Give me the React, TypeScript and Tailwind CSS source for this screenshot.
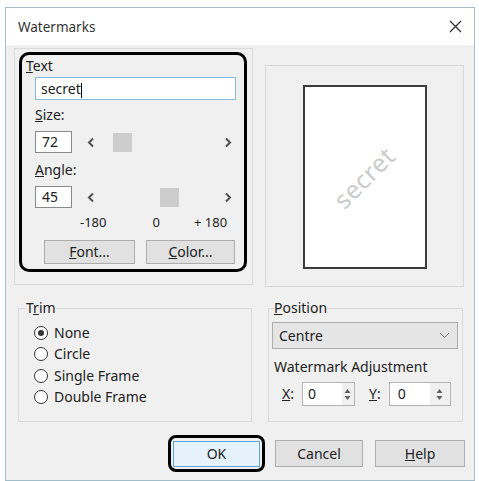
import React from "react"

function Chevron({ dir }: { dir: "left" | "right" }) {
    return (
        <svg width="8" height="11" viewBox="0 0 8 11" className="shrink-0">
            <path
                d={dir === "left" ? "M6 1.5 L2 5.5 L6 9.5" : "M2 1.5 L6 5.5 L2 9.5"}
                fill="none"
                stroke="#505050"
                strokeWidth="2"
            />
        </svg>
    )
}

function Spin() {
    return (
        <svg width="7" height="13" viewBox="0 0 7 13">
            <path d="M3.5 1 L6.5 5 L0.5 5 Z" fill="#606060" />
            <path d="M0.5 8 L6.5 8 L3.5 12 Z" fill="#606060" />
        </svg>
    )
}

function ScrollRow({ value, thumb }: { value: string; thumb: number }) {
    return (
        <div className="flex items-center ml-[13px] w-[197px] h-[22px]">
            <div className="w-[37px] h-[22px] border border-[#8a8a8a] bg-white pl-[6px] leading-[20px] text-[14px]">
                {value}
            </div>
            <div className="ml-[15px]">
                <Chevron dir="left" />
            </div>
            <div className="h-[19px] w-[19px] bg-[#cdcdcd]" style={{ marginLeft: thumb }} />
            <div className="flex-1" />
            <Chevron dir="right" />
        </div>
    )
}

function Radio({ label, checked }: { label: string; checked?: boolean }) {
    return (
        <div className="flex items-center h-[21.5px] pl-[15px]">
            <div className="w-[14px] h-[14px] rounded-full border border-[#333] bg-white flex items-center justify-center">
                {checked && <div className="w-[6px] h-[6px] rounded-full bg-[#333]" />}
            </div>
            <span className="ml-[6px]">{label}</span>
        </div>
    )
}

function Btn({ children, w }: { children: React.ReactNode; w: string }) {
    return (
        <div className={`${w} h-[24px] bg-[#e1e1e1] border border-[#adadad] flex items-center justify-center text-[14px]`}>
            {children}
        </div>
    )
}

export default function App() {
    return (
        <div className="w-[479px] h-[481px] bg-white pt-[7px] pl-[5px] font-['Noto_Sans',sans-serif] text-[14px] text-[#222] leading-[18px]">
            <div className="w-[470px] h-[474px] border border-[#a3bcc9] flex flex-col">
                {/* title bar */}
                <div className="h-[37px] bg-white flex items-center justify-between pl-[12px] pr-[12px]">
                    <span className="text-[#333] text-[13.5px]">Watermarks</span>
                    <svg width="13" height="13" viewBox="0 0 13 13">
                        <path d="M1 1 L12 12 M12 1 L1 12" stroke="#333" strokeWidth="1.3" />
                    </svg>
                </div>

                <div className="flex-1 bg-[#f0f0f0] flex flex-col">
                    {/* top row */}
                    <div className="flex items-start">
                        <div className="ml-[8px] mt-[3px] w-[239px] h-[237px] border border-[#dadada]">
                            <div className="ml-[4px] mt-[3px] w-[228px] h-[220px] border-[3px] border-black rounded-[10px] flex flex-col">
                                <div className="pl-[4px] pt-[2px]">
                                    <u>T</u>ext
                                </div>
                                <div className="ml-[13px] mt-[2px] w-[201px] h-[23px] border border-[#86b9dd] bg-white pl-[5px] leading-[21px]">
                                    secret<span className="inline-block w-px h-[15px] bg-black align-middle" />
                                </div>
                                <div className="ml-[13px] mt-[6px]">
                                    <u>S</u>ize:
                                </div>
                                <div className="mt-[7px]">
                                    <ScrollRow value="72" thumb={18} />
                                </div>
                                <div className="ml-[13px] mt-[8px]">
                                    <u>A</u>ngle:
                                </div>
                                <div className="mt-[7px]">
                                    <ScrollRow value="45" thumb={65} />
                                </div>
                                <div className="mt-[5px] flex text-[13px]">
                                    <span className="ml-[58px]">-180</span>
                                    <span className="ml-[46px]">0</span>
                                    <span className="ml-[34px]">+ 180</span>
                                </div>
                                <div className="mt-[9px] ml-[22px] flex gap-[11px]">
                                    <Btn w="w-[91px]">
                                        <span>
                                            <u>F</u>ont...
                                        </span>
                                    </Btn>
                                    <Btn w="w-[89px]">
                                        <span>
                                            <u>C</u>olor...
                                        </span>
                                    </Btn>
                                </div>
                            </div>
                        </div>

                        <div className="ml-[12px] mt-[20px] w-[199px] h-[222px] border border-[#d8d8d8] flex justify-center">
                            <div className="mt-[19px] w-[124px] h-[184px] border-2 border-[#3c3c3c] bg-white flex items-center justify-center overflow-hidden">
                                <span className="-rotate-45 text-[25px] leading-none text-[#cbcbcb] tracking-[0.5px]">
                                    secret
                                </span>
                            </div>
                        </div>
                    </div>

                    {/* bottom row */}
                    <div className="flex mt-[12px]">
                        <fieldset className="ml-[12px] w-[234px] h-[123px] border border-[#dadada] pl-[7px]">
                            <legend>
                                T<u>r</u>im
                            </legend>
                            <div className="-ml-[7px] mt-[5px] flex flex-col">
                                <Radio label="None" checked />
                                <Radio label="Circle" />
                                <Radio label="Single Frame" />
                                <Radio label="Double Frame" />
                            </div>
                        </fieldset>

                        <fieldset className="ml-[16px] w-[195px] h-[123px] border border-[#dadada] pl-[5px]">
                            <legend>
                                <u>P</u>osition
                            </legend>
                            <div className="-ml-[2px] mt-[5px] w-[186px] h-[27px] bg-[#e5e5e5] border border-[#adadad] flex items-center justify-between pl-[6px] pr-[7px]">
                                <span>Centre</span>
                                <svg width="11" height="7" viewBox="0 0 11 7">
                                    <path d="M1 1 L5.5 5.5 L10 1" fill="none" stroke="#777" strokeWidth="1" />
                                </svg>
                            </div>
                            <div className="mt-[9px]">Watermark Adjustment</div>
                            <div className="mt-[6px] flex items-center h-[24px]">
                                <span className="ml-[8px]">
                                    <u>X</u>:
                                </span>
                                <div className="ml-[8px] h-[24px] flex border border-[#b4b4b4] bg-white">
                                    <div className="w-[39px] pl-[5px] leading-[22px]">0</div>
                                    <div className="w-[12px] flex items-center justify-center bg-[#f0f0f0]">
                                        <Spin />
                                    </div>
                                </div>
                                <span className="ml-[14px]">
                                    <u>Y</u>:
                                </span>
                                <div className="ml-[8px] h-[24px] flex border border-[#b4b4b4] bg-white">
                                    <div className="w-[40px] pl-[8px] leading-[22px]">0</div>
                                    <div className="w-[20px] flex items-center justify-center bg-[#f0f0f0]">
                                        <Spin />
                                    </div>
                                </div>
                            </div>
                        </fieldset>
                    </div>

                    {/* buttons */}
                    <div className="flex items-center mt-[13px]">
                        <div className="ml-[162px] w-[97px] h-[37px] border-[3px] border-black rounded-[8px] flex items-center justify-center">
                            <div className="w-[87px] h-[26px] bg-[#e5f1fb] border border-[#5ea5e0] flex items-center justify-center">
                                OK
                            </div>
                        </div>
                        <div className="ml-[10px]">
                            <Btn w="w-[88px] !h-[27px]">Cancel</Btn>
                        </div>
                        <div className="ml-[12px]">
                            <Btn w="w-[90px] !h-[27px]">
                                <span>
                                    <u>H</u>elp
                                </span>
                            </Btn>
                        </div>
                    </div>
                </div>
            </div>
        </div>
    )
}
